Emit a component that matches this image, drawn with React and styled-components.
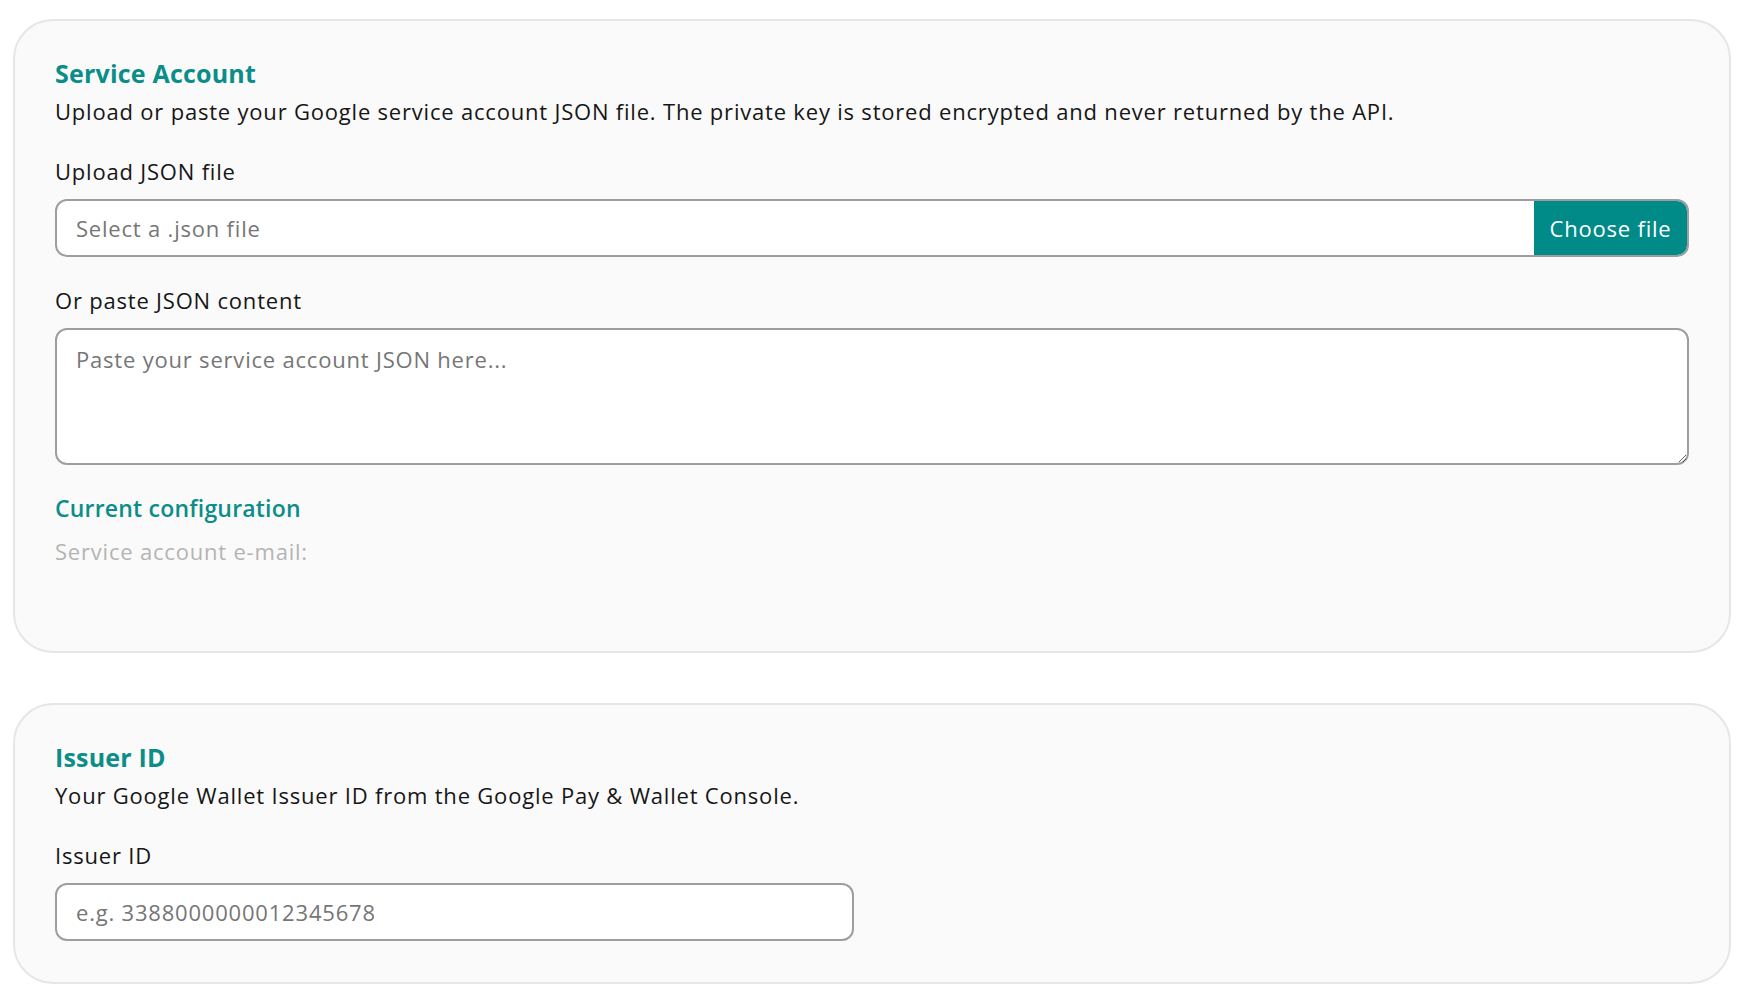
import React from 'react'
import styled, { createGlobalStyle } from 'styled-components'

const GlobalStyle = createGlobalStyle`
  html, body {
    margin: 0;
    padding: 0;
    background: #ffffff;
  }
  body {
    font-family: "Open Sans", "Noto Sans", sans-serif;
    color: #161616;
    letter-spacing: 0.8px;
  }
  * { box-sizing: border-box; }
`

const Page = styled.div`
  display: flex;
  flex-direction: column;
  gap: 50px;
  padding: 19px 13px 13px;
`

const Card = styled.section`
  background: #fafafa;
  border: 2px solid #e6e6e6;
  border-radius: 40px;
  padding: 34px 40px 41px;
  display: flex;
  flex-direction: column;
`

const Title = styled.h2`
  margin: 0;
  font-size: 25px;
  line-height: 36px;
  font-weight: 700;
  letter-spacing: 0.2px;
  color: #0b8d89;
`

const Description = styled.p`
  margin: 4px 0 0;
  font-size: 22px;
  line-height: 32px;
  color: #161616;
`

const Label = styled.label`
  display: block;
  margin-top: ${p => p.$gap || 28}px;
  font-size: 22px;
  line-height: 32px;
  color: #161616;
`

const FileField = styled.div`
  margin-top: 12px;
  display: flex;
  height: 58px;
  border: 2px solid #9e9e9e;
  border-radius: 12px;
  background: #ffffff;
  overflow: hidden;
`

const FileName = styled.span`
  flex: 1;
  display: flex;
  align-items: center;
  padding: 0 19px;
  font-size: 22px;
  color: #767676;
`

const ChooseButton = styled.button`
  width: 153px;
  border: none;
  background: #008b88;
  color: #ffffff;
  font-family: inherit;
  font-size: 22px;
  letter-spacing: 0.8px;
  cursor: pointer;
`

const TextInput = styled.input`
  display: block;
  margin-top: 12px;
  width: ${p => p.$width || '100%'};
  height: 58px;
  padding: 0 19px;
  border: 2px solid #9e9e9e;
  border-radius: 12px;
  background: #ffffff;
  font-family: inherit;
  font-size: 22px;
  letter-spacing: 0.8px;
  color: #161616;
  outline: none;
  &::placeholder { color: #767676; }
`

const TextArea = styled.textarea`
  display: block;
  margin-top: 12px;
  width: 100%;
  height: 137px;
  padding: 14px 19px;
  border: 2px solid #9e9e9e;
  border-radius: 12px;
  background: #ffffff;
  font-family: inherit;
  font-size: 22px;
  line-height: 30px;
  letter-spacing: 0.8px;
  color: #161616;
  outline: none;
  resize: vertical;
  &::placeholder { color: #767676; }
`

const SubTitle = styled.h3`
  margin: 27px 0 0;
  font-size: 23px;
  line-height: 32px;
  font-weight: 600;
  letter-spacing: 0.2px;
  color: #0b8d89;
`

const Muted = styled.p`
  margin: 11px 0 43px;
  font-size: 22px;
  line-height: 32px;
  color: #b4b4b4;
`

export default function App() {
  return (
    <>
      <GlobalStyle />
      <Page>
        <Card>
          <Title>Service Account</Title>
          <Description>
            Upload or paste your Google service account JSON file. The private key is stored encrypted and never returned by the API.
          </Description>
          <Label>Upload JSON file</Label>
          <FileField>
            <FileName>Select a .json file</FileName>
            <ChooseButton type="button">Choose file</ChooseButton>
          </FileField>
          <Label $gap={27}>Or paste JSON content</Label>
          <TextArea placeholder="Paste your service account JSON here..." />
          <SubTitle>Current configuration</SubTitle>
          <Muted>Service account e-mail:</Muted>
        </Card>
        <Card>
          <Title>Issuer ID</Title>
          <Description>Your Google Wallet Issuer ID from the Google Pay &amp; Wallet Console.</Description>
          <Label>Issuer ID</Label>
          <TextInput $width="799px" placeholder="e.g. 3388000000012345678" />
        </Card>
      </Page>
    </>
  )
}
